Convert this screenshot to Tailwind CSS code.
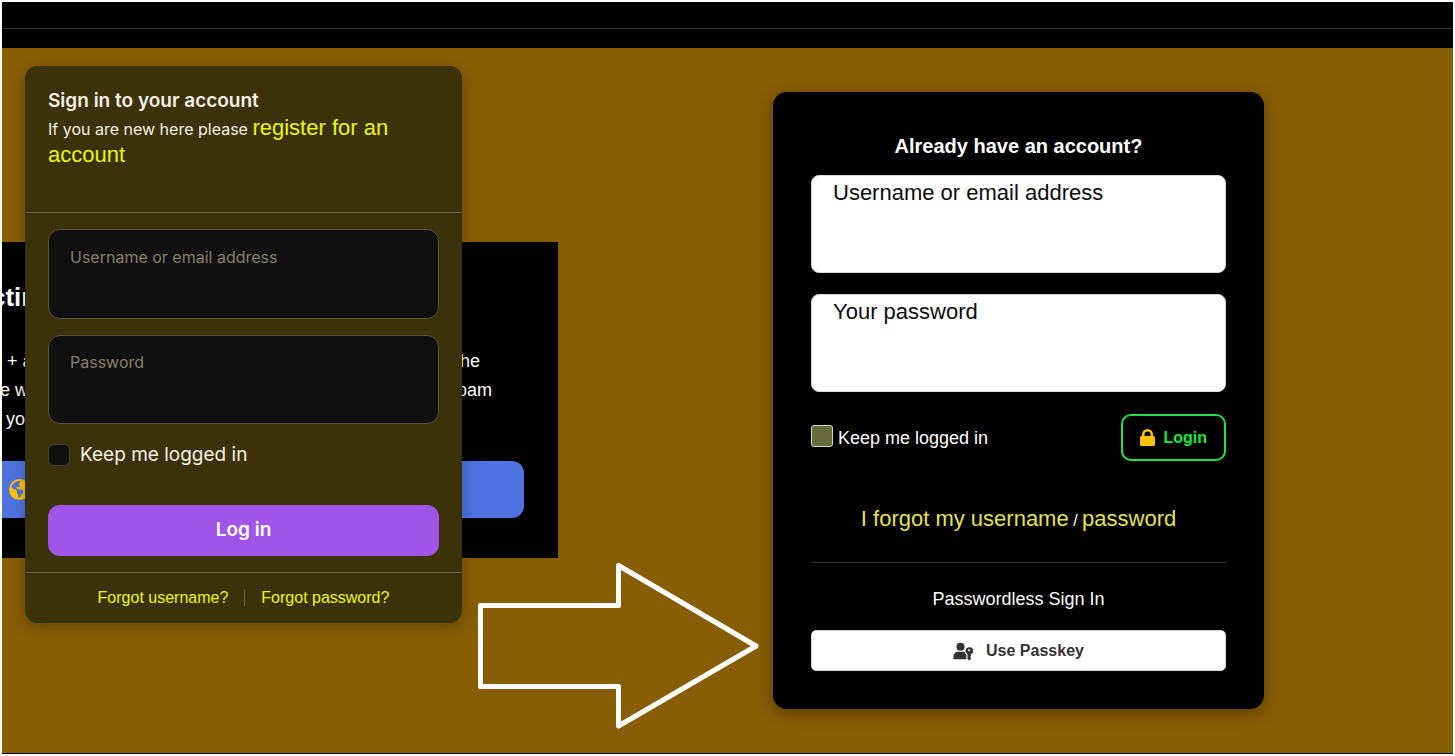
<!DOCTYPE html>
<html lang="en">
<head>
<meta charset="utf-8">
<meta name="viewport" content="width=device-width, initial-scale=1">
<title>Sign in</title>
<script src="https://cdn.jsdelivr.net/npm/@tailwindcss/browser@4"></script>
</head>
<body class="flex min-h-screen flex-col bg-white p-[2px] font-['Liberation_Sans',Arial,sans-serif] text-white">
<header class="bg-black">
  <div class="h-[26px]"></div>
  <div class="h-5 border-t border-[#323636]"></div>
</header>
<main class="relative flex grow items-start overflow-hidden border-b border-black bg-[#875d06]">

  <!-- Left column: page panel with the sign-in card over it -->
  <section class="relative w-[556px] shrink-0 pt-[194px]">
    <div class="flex h-[316px] flex-col overflow-hidden bg-black pt-[37px] text-lg leading-[29px]">
      <h2 class="-ml-[11px] pb-8 text-[26px] leading-9 font-bold">cting</h2>
      <p class="flex justify-between pr-[78px] pl-[5px]"><span>+ a</span><span>the</span></p>
      <p class="-ml-[2px] flex justify-between pr-[66px]"><span>e w</span><span>spam</span></p>
      <p class="pl-1">you</p>
      <button type="button" aria-label="Visit site" class="mt-[27px] mr-[34px] flex h-[57px] shrink-0 items-center rounded-r-xl bg-[#4e73e0] pl-[7px]">
        <svg class="size-[21px]" viewBox="0 0 512 512" fill="#ffc107"><path d="M57.7 193l9.4 16.4c8.300 14.500 21.900 25.200 38 29.800L163 255.700c17.200 4.900 29 20.600 29 38.500v39.900c0 11 6.200 21 16 25.900s16 14.900 16 25.900v39c0 15.600 14.900 26.900 29.900 22.600c16.100-4.600 28.600-17.500 32.700-33.800l2.800-11.200c4.200-16.900 15.200-31.400 30.300-40l8.100-4.600c15-8.500 24.200-24.500 24.200-41.700v-8.300c0-12.700-5.100-24.900-14.100-33.900l-3.900-3.900c-9-9-21.200-14.100-33.900-14.100H257c-11.100 0-22.100-2.900-31.800-8.400l-34.500-19.700c-4.300-2.500-7.600-6.500-9.200-11.200c-3.200-9.600 1.100-20 10.200-24.500l5.900-3c6.600-3.300 14.300-3.900 21.300-1.500l23.200 7.700c8.200 2.700 17.200-.4 21.900-7.500c4.700-7 4.200-16.300-1.200-22.800l-13.600-16.300c-10-12-9.900-29.500 .3-41.300l15.700-18.300c8.800-10.300 10.200-25 3.500-36.700l-2.400-4.200c-3.500-.2-6.900-.3-10.400-.3C163.100 48 84.400 108.900 57.700 193zM464 256c0-36.800-9.600-71.400-26.400-101.500L412 164.800c-15.700 6.300-23.800 23.800-18.500 39.800l16.900 50.700c3.500 10.400 12 18.300 22.600 20.900l29.100 7.300c1.200-9 1.800-18.200 1.800-27.500zM0 256a256 256 0 1 1 512 0A256 256 0 1 1 0 256z"/></svg>
      </button>
    </div>

    <form class="absolute top-[18px] left-[23px] w-[437px] rounded-xl border border-[#38310f] bg-[#3c3209] font-['Inter',sans-serif] text-[#f5f1e6] shadow-[0_4px_14px_rgba(0,0,0,0.25)]">
      <div class="h-[146px] border-b border-[#66604c] px-[22px] pt-[21px]">
        <h1 class="text-[19px] leading-[26px] font-semibold">Sign in to your account</h1>
        <p class="font-['Liberation_Sans',Arial,sans-serif] text-[22px] leading-[27px]"><span class="font-['Inter',sans-serif] text-base leading-none">If you are new here please </span><a href="#" class="text-[#e8f90c]">register for an account</a></p>
      </div>
      <div class="flex flex-col gap-4 px-[22px] py-4">
        <input type="text" aria-label="Username or email address" placeholder="Username or email address" class="h-[90px] w-full rounded-xl border border-[#57533f] bg-[#101010] px-[21px] pb-[34px] text-base placeholder:text-[#858069]">
        <input type="password" aria-label="Password" placeholder="Password" class="h-[89px] w-full rounded-xl border border-[#57533f] bg-[#101010] px-[21px] pb-[35px] text-base placeholder:text-[#858069]">
        <label class="mb-5 flex items-center gap-[10px] text-[19px] leading-[29px]"><input type="checkbox" class="size-[22px] appearance-none rounded-md border border-[#47432f] bg-[#101010]">Keep me logged in</label>
        <button type="submit" class="h-[51px] w-full rounded-xl bg-[#a054e8] text-[19px] font-semibold text-white">Log in</button>
      </div>
      <div class="flex h-[50px] items-center justify-center border-t border-[#66604c] font-['Liberation_Sans',Arial,sans-serif] text-base text-[#e8f90c]">
        <a href="#" class="pr-4">Forgot username?</a>
        <span class="h-[17px] w-px bg-[#66604c]"></span>
        <a href="#" class="pl-4">Forgot password?</a>
      </div>
    </form>
  </section>

  <!-- Right column: account card -->
  <form class="mt-11 ml-[215px] w-[491px] shrink-0 rounded-[14px] bg-black px-[38px] pt-[41px] pb-[38px] shadow-[0_4px_16px_rgba(0,0,0,0.35)]">
    <h2 class="pb-[15px] text-center text-xl leading-[27px] font-bold">Already have an account?</h2>
    <div class="flex flex-col gap-[21px]">
      <input type="text" aria-label="Username or email address" placeholder="Username or email address" class="h-[98px] w-full rounded-lg border border-[#d5d8da] bg-white px-[21px] pb-[62px] text-[22px] text-black placeholder:text-[#0c0c0c]">
      <input type="password" aria-label="Your password" placeholder="Your password" class="h-[98px] w-full rounded-lg border border-[#d5d8da] bg-white px-[21px] pb-[62px] text-[22px] text-black placeholder:text-[#0c0c0c]">
    </div>
    <div class="flex items-center justify-between pt-[22px]">
      <label class="flex items-center gap-[5px] text-lg leading-6"><input type="checkbox" class="mb-1 size-[22px] appearance-none rounded-[3px] border border-[#d8d8c8] bg-[#666b3c]">Keep me logged in</label>
      <button type="submit" class="flex h-[47px] items-center gap-[7px] rounded-[10px] border-2 border-[#20e34b] pr-[17px] pl-4 text-base font-bold text-[#16ea37]">
        <svg class="h-[18px] w-[17px]" viewBox="0 0 17 18" fill="#ffc107"><path fill-rule="evenodd" d="M3 7V5.500a5.500 5.500 0 0 1 11 0V7h.500A1.500 1.500 0 0 1 16 8.500v7a1.500 1.500 0 0 1-1.500 1.500h-12A1.500 1.500 0 0 1 1 15.500v-7A1.500 1.500 0 0 1 2.500 7zM5.500 7h6V5.500a3 3 0 0 0-6 0z"/></svg>
        Login
      </button>
    </div>
    <p class="border-b border-[#333] pt-[43px] pb-[27px] text-center text-base leading-[29px]"><a href="#" class="text-[22px] text-[#e6e24a]">I forgot my username</a> / <a href="#" class="text-[22px] text-[#e6e24a]">password</a></p>
    <p class="pt-[23px] pb-[17px] text-center text-lg leading-[27px]">Passwordless Sign In</p>
    <button type="button" class="flex h-[41px] w-full items-center justify-center gap-[13px] rounded-[5px] border border-[#d0d3d6] bg-white text-base font-bold text-[#333]">
      <svg class="h-5 w-5" viewBox="0 0 24 24" fill="currentColor"><path fill-rule="evenodd" d="M9 2a4.900 4.900 0 1 0 0 9.800A4.900 4.900 0 0 0 9 2zM6 13a5.500 5.500 0 0 0-5.500 5.500V22H16v-5.500a6.300 6.300 0 0 1-2.200-3.500zM19.300 7.500a4.200 4.200 0 0 0-1.900 8v6.200l1.900 1.800 2.800-2.800-1.600-1.700 1.600-1.600-1.300-1.600a4.200 4.200 0 0 0-1.500-8.300zm0 2.300a1.300 1.300 0 1 1 0 2.600 1.300 1.300 0 0 1 0-2.600z"/></svg>
      Use Passkey
    </button>
  </form>

  <!-- Arrow annotation between the two cards -->
  <svg class="absolute top-[512px] left-[473px] h-[170px] w-[286px]" viewBox="0 0 286 170" fill="none" stroke="#fff" stroke-width="5" stroke-linejoin="round" aria-hidden="true"><path d="M5.500 45.500h138V5.500L281 86 143.500 166v-39.500h-138z"/></svg>
</main>
</body>
</html>
